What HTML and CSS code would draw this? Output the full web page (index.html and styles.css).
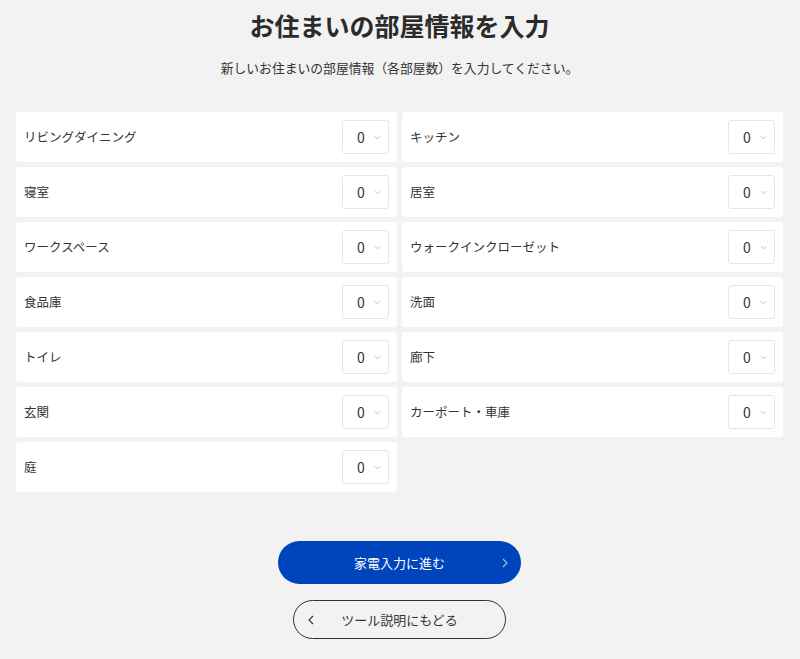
FILE: index.html
```html
<!DOCTYPE html>
<html lang="ja">
<head>
    <meta charset="UTF-8">
    <meta name="viewport" content="width=device-width, initial-scale=1.0">
    <title>お住まいの部屋情報を入力</title>
    <link rel="stylesheet" href="styles.css">
</head>
<body>
    <div class="page">
        <h1 class="page-title">お住まいの部屋情報を入力</h1>
        <p class="page-lead">新しいお住まいの部屋情報（各部屋数）を入力してください。</p>

        <!-- 部屋リスト -->
        <div class="room-grid">
            <div class="room-item"><span class="room-name">リビングダイニング</span><div class="count-select"><span>0</span><svg viewBox="0 0 8 5" class="count-arrow"><path d="M1 1l3 3 3-3"/></svg></div></div>
            <div class="room-item"><span class="room-name">キッチン</span><div class="count-select"><span>0</span><svg viewBox="0 0 8 5" class="count-arrow"><path d="M1 1l3 3 3-3"/></svg></div></div>
            <div class="room-item"><span class="room-name">寝室</span><div class="count-select"><span>0</span><svg viewBox="0 0 8 5" class="count-arrow"><path d="M1 1l3 3 3-3"/></svg></div></div>
            <div class="room-item"><span class="room-name">居室</span><div class="count-select"><span>0</span><svg viewBox="0 0 8 5" class="count-arrow"><path d="M1 1l3 3 3-3"/></svg></div></div>
            <div class="room-item"><span class="room-name">ワークスペース</span><div class="count-select"><span>0</span><svg viewBox="0 0 8 5" class="count-arrow"><path d="M1 1l3 3 3-3"/></svg></div></div>
            <div class="room-item"><span class="room-name">ウォークインクローゼット</span><div class="count-select"><span>0</span><svg viewBox="0 0 8 5" class="count-arrow"><path d="M1 1l3 3 3-3"/></svg></div></div>
            <div class="room-item"><span class="room-name">食品庫</span><div class="count-select"><span>0</span><svg viewBox="0 0 8 5" class="count-arrow"><path d="M1 1l3 3 3-3"/></svg></div></div>
            <div class="room-item"><span class="room-name">洗面</span><div class="count-select"><span>0</span><svg viewBox="0 0 8 5" class="count-arrow"><path d="M1 1l3 3 3-3"/></svg></div></div>
            <div class="room-item"><span class="room-name">トイレ</span><div class="count-select"><span>0</span><svg viewBox="0 0 8 5" class="count-arrow"><path d="M1 1l3 3 3-3"/></svg></div></div>
            <div class="room-item"><span class="room-name">廊下</span><div class="count-select"><span>0</span><svg viewBox="0 0 8 5" class="count-arrow"><path d="M1 1l3 3 3-3"/></svg></div></div>
            <div class="room-item"><span class="room-name">玄関</span><div class="count-select"><span>0</span><svg viewBox="0 0 8 5" class="count-arrow"><path d="M1 1l3 3 3-3"/></svg></div></div>
            <div class="room-item"><span class="room-name">カーポート・車庫</span><div class="count-select"><span>0</span><svg viewBox="0 0 8 5" class="count-arrow"><path d="M1 1l3 3 3-3"/></svg></div></div>
            <div class="room-item"><span class="room-name">庭</span><div class="count-select"><span>0</span><svg viewBox="0 0 8 5" class="count-arrow"><path d="M1 1l3 3 3-3"/></svg></div></div>
        </div>

        <!-- ボタン -->
        <div class="actions">
            <button class="btn-next">家電入力に進む<svg viewBox="0 0 6 10" class="btn-icon btn-icon-right"><path d="M1 1l4 4-4 4"/></svg></button>
            <button class="btn-back"><svg viewBox="0 0 6 10" class="btn-icon btn-icon-left"><path d="M5 1L1 5l4 4"/></svg>ツール説明にもどる</button>
        </div>
    </div>
</body>
</html>
```

FILE: styles.css
```css
/* 共通 */
body {
    margin: 0;
    background-color: #f2f2f2;
    color: #333333;
    font-family: 'Noto Sans CJK JP', 'Noto Sans', sans-serif;
}

.page {
    padding: 7px 17px 20px 16px;
}

.page-title {
    margin: 0;
    font-size: 25px;
    line-height: 36px;
    font-weight: bold;
    text-align: center;
    color: #2b2b2b;
}

.page-lead {
    margin: 15px 0 0;
    font-size: 12.8px;
    line-height: 20px;
    text-align: center;
}

/* 部屋リスト */
.room-grid {
    margin-top: 34px;
    display: grid;
    grid-template-columns: 1fr 1fr;
    gap: 5px;
}

.room-item {
    height: 50px;
    padding: 0 8px;
    background-color: #ffffff;
    border-radius: 3px;
    display: flex;
    align-items: center;
    justify-content: space-between;
}

.room-name {
    font-size: 12.5px;
    line-height: 18px;
}

.count-select {
    width: 47px;
    height: 34px;
    box-sizing: border-box;
    border: 1px solid #e6e6e6;
    border-radius: 3px;
    background-color: #ffffff;
    display: flex;
    align-items: center;
    padding-left: 14px;
    gap: 9px;
    font-size: 14px;
    color: #333333;
}

.count-arrow {
    width: 7px;
    height: 5px;
    fill: none;
    stroke: #b8b8b8;
    stroke-width: 1;
}

/* ボタン */
.actions {
    margin-top: 49px;
    display: flex;
    flex-direction: column;
    align-items: center;
    gap: 16px;
}

.btn-next,
.btn-back {
    position: relative;
    border-radius: 999px;
    font-family: inherit;
    font-size: 13px;
    cursor: pointer;
    display: flex;
    align-items: center;
    justify-content: center;
}

.btn-next {
    width: 243px;
    height: 43px;
    border: none;
    background-color: #0044bb;
    color: #ffffff;
}

.btn-back {
    width: 213px;
    height: 39px;
    border: 1px solid #333333;
    background-color: transparent;
    color: #333333;
}

.btn-icon {
    position: absolute;
    top: 50%;
    width: 6px;
    height: 10px;
    margin-top: -5px;
    fill: none;
    stroke-width: 1.1;
}

.btn-icon-right {
    right: 13px;
    stroke: #aac4ee;
}

.btn-icon-left {
    left: 14px;
    stroke: #333333;
}
```
